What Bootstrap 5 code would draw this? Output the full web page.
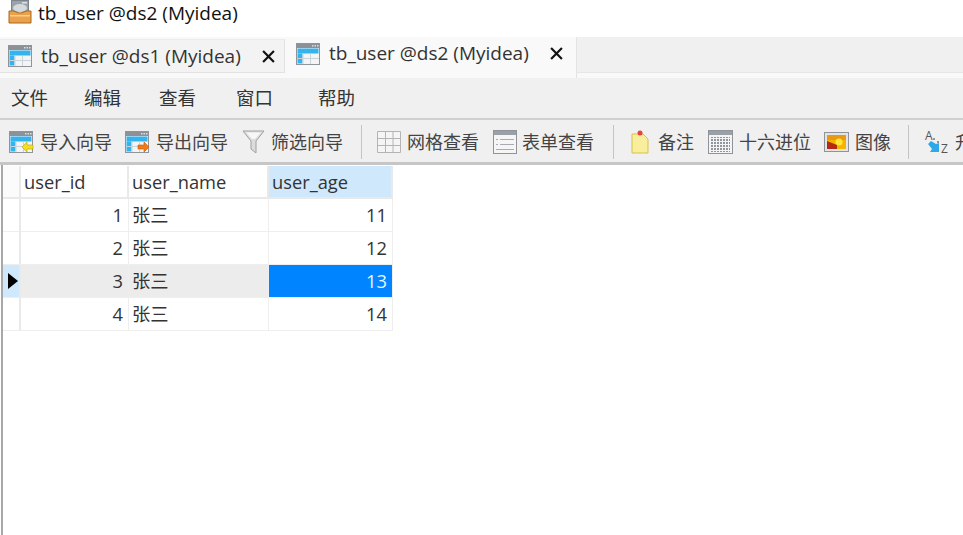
<!DOCTYPE html>
<html lang="zh">
<head>
<meta charset="utf-8">
<title>tb_user @ds2 (Myidea)</title>
<link href="https://cdn.jsdelivr.net/npm/bootstrap@5.3.0/dist/css/bootstrap.min.css" rel="stylesheet">
<style>
html,body{height:535px;overflow:hidden;background:#fff}
body{font-family:"Open Sans","Noto Sans CJK SC",sans-serif;color:#222;font-size:18px}
.titlebar{height:37px;padding-left:8px;gap:6px;color:#111;font-size:19px;line-height:26px}
.tabstrip{height:41px;background:#f9f9f9}
.tabx{height:34px;margin-top:2px;width:285px;background:#f3f3f3;border-right:1px solid #e2e2e2;border-bottom:1px solid #e2e2e2;border-top:1px solid #ececec;padding-left:8px;font-size:19px;color:#333}
.tabx.onx{height:41px;margin-top:0;width:292px;background:#f9f9f9;border:0;border-right:1px solid #e4e4e4;padding:0 0 8px 11px}
.tabfill{flex:1;height:36px;background:#f0f0f0;border-bottom:1px solid #e6e6e6}
.tabname{margin-left:9px;white-space:nowrap}
.closex{margin-left:auto;margin-right:9px;width:13px;height:13px}
.tabx.onx .closex{margin-right:13px}
.menubar{height:42px;background:#f0f0f0;border-bottom:2px solid #cfcfcf;font-size:18.5px;padding-left:11px;color:#333}
.menubar span{white-space:nowrap}
.m1{width:73px}.m2{width:75px}.m3{width:77px}.m4{width:82px}
.toolbar{height:45px;background:#f0f0f0;border-bottom:3px solid #c6c6c6;padding-left:9px;padding-top:2px;font-size:18px;color:#444;white-space:nowrap;width:963px;overflow:hidden}
.tool{gap:6px;flex:none}
.tight{gap:5px}.wide{gap:8px}
.mg13{margin-left:13px}.mg14{margin-left:14px}
.sepx{width:1px;height:34px;background:#c4c4c4;flex:none}
.sa{margin:0 15px 0 18px}.sb{margin:0 16px 0 19px}.sc{margin:0 15px 0 17px}
.gridwrap{height:370px;border-left:2px solid #a8a8a8;margin-left:1px;padding-top:1px}
.dgrid{border-collapse:separate;border-spacing:0;table-layout:fixed;width:390px;font-size:18.3px;line-height:22px;color:#333}
.dgrid td{padding:0 5px 0 3px;border-right:1px solid #eeeeee;border-bottom:1px solid #eeeeee;height:33px;overflow:hidden;white-space:nowrap}
.dgrid tr.headx td{height:33px;border-bottom:2px solid #e9e9e9;border-right:2px solid #e9e9e9}
.rh{width:18px;background:#fff;border-right:2px solid #e9e9e9!important;padding:0!important}
.headx .rh{background:#fbfbfb}
.num{text-align:right}
.curx td{background:#ececec}
.curx .rh{background:#cfe8fc}
.dgrid .selh{background:#cfe8fc}
.dgrid .selc{background:#0084ff;color:#e6f3ff}
.arrowx{display:block;width:0;height:0;margin-left:5px;border-left:10px solid #000;border-top:8px solid transparent;border-bottom:8px solid transparent}
.cg18{width:18px}.cg108{width:108px}.cg140{width:140px}.cg124{width:124px}
svg{display:block;flex:none}
.azx{overflow:visible}
.azx text{font-family:"Open Sans",sans-serif;font-size:12px;fill:#555}
</style>
</head>
<body>
<svg width="0" height="0" class="position-absolute">
<defs>
<symbol id="tbl" viewBox="0 0 24 22">
<rect x=".5" y=".5" width="23" height="21" fill="#f4f4f4" stroke="#8e9499"/>
<rect x="1" y="1" width="22" height="4" fill="#8b9197"/>
<rect x="16" y="2" width="1.5" height="1.5" fill="#ddd"/><rect x="18.5" y="2" width="1.5" height="1.5" fill="#ddd"/><rect x="21" y="2" width="1.5" height="1.5" fill="#ddd"/>
<rect x="1.500" y="5.500" width="21" height="5" fill="#34b4ef"/>
<rect x="1.500" y="10.500" width="5" height="10" fill="#34b4ef"/>
<path d="M7 10.500V21M14.500 10.500V21M2 15.500H23" stroke="#c8d4dc" fill="none"/>
</symbol>
</defs>
</svg>

<div class="titlebar d-flex align-items-start">
<svg width="24" height="24" viewBox="0 0 24 24"><rect x="3.500" y=".5" width="17" height="11" fill="#9aa3aa" stroke="#7d858c"/><rect x="14" y="2" width="5" height="1.500" fill="#e2e2e2"/><ellipse cx="12" cy="8" rx="7" ry="4" fill="#d5dade"/><path d="M1 11H6Q9 13 12 13T18 11H23V23H1Z" fill="#eba14a" stroke="#a9681f"/><rect x="2" y="15" width="20" height="1.500" fill="#f8d08f"/></svg>
<span>tb_user @ds2 (Myidea)</span>
</div>

<div class="tabstrip d-flex align-items-start">
<div class="tabx d-flex align-items-center">
<svg width="24" height="22"><use href="#tbl"/></svg>
<span class="tabname">tb_user @ds1 (Myidea)</span>
<svg class="closex" viewBox="0 0 12 12"><path d="M1 1L11 11M11 1L1 11" stroke="#111" stroke-width="2"/></svg>
</div>
<div class="tabx onx d-flex align-items-center">
<svg width="24" height="22"><use href="#tbl"/></svg>
<span class="tabname">tb_user @ds2 (Myidea)</span>
<svg class="closex" viewBox="0 0 12 12"><path d="M1 1L11 11M11 1L1 11" stroke="#111" stroke-width="2"/></svg>
</div>
<div class="tabfill"></div>
</div>

<div class="menubar d-flex align-items-center">
<span class="m1">文件</span><span class="m2">编辑</span><span class="m3">查看</span><span class="m4">窗口</span><span>帮助</span>
</div>

<div class="toolbar d-flex align-items-center">
<div class="tool d-flex align-items-center">
<svg width="25" height="22" viewBox="0 0 25 22"><use href="#tbl" width="24" height="22"/><path d="M13 16L18 11V14H24V18H18V21Z" fill="#f5e020" stroke="#b9a400" stroke-width=".6"/></svg><span>导入向导</span></div>
<div class="tool mg13 d-flex align-items-center">
<svg width="25" height="22" viewBox="0 0 25 22"><use href="#tbl" width="24" height="22"/><path d="M24 16L19 11V14H13V18H19V21Z" fill="#f47a16" stroke="#c85a05" stroke-width=".6"/></svg><span>导出向导</span></div>
<div class="tool mg14 d-flex align-items-center">
<svg width="23" height="24" viewBox="0 0 23 24"><path d="M1 1H22L14 11V23L9 19V11Z" fill="#dcdcdc" stroke="#a0a0a0"/><path d="M4 2.500H19L13 9H10Z" fill="#f7f7f7"/></svg><span>筛选向导</span></div>
<div class="sepx sa"></div>
<div class="tool d-flex align-items-center">
<svg width="24" height="22" viewBox="0 0 24 22"><path d="M.5.500H23.500V21.500H.5ZM8.500 1V21M16 1V21M1 7.500H23M1 14.500H23" fill="#f5f5f5" stroke="#b4b4b4"/></svg><span>网格查看</span></div>
<div class="tool tight mg14 d-flex align-items-center">
<svg width="24" height="24" viewBox="0 0 24 24"><rect x=".5" y=".5" width="23" height="23" fill="#f5f5f5" stroke="#8e9499"/><rect x="1" y="1" width="22" height="4" fill="#9aa0a5"/><path d="M7 9.500H21M7 14.500H21M3 9.500H5M3 14.500H5M3 19.500H21" stroke="#a8acb0"/></svg><span>表单查看</span></div>
<div class="sepx sb"></div>
<div class="tool wide d-flex align-items-center">
<svg width="20" height="24" viewBox="0 0 20 24"><path d="M2 4H13L18 9V23H2Z" fill="#f8ee9b" stroke="#d7c24f"/><circle cx="10" cy="3" r="2.500" fill="#e8403a"/></svg><span>备注</span></div>
<div class="tool mg14 d-flex align-items-center">
<svg width="25" height="24" viewBox="0 0 25 24"><defs><pattern id="dots" width="3" height="3" patternUnits="userSpaceOnUse"><rect width="2" height="2" fill="#8f979e"/></pattern></defs><rect x=".5" y=".5" width="24" height="23" fill="#f4f4f4" stroke="#8e9499"/><rect x="1" y="1" width="23" height="4" fill="#9aa0a5"/><rect x="3" y="7" width="19" height="15" fill="url(#dots)"/></svg><span>十六进位</span></div>
<div class="tool mg13 d-flex align-items-center">
<svg width="25" height="20" viewBox="0 0 25 20"><rect x=".5" y=".5" width="24" height="19" fill="#e4e4e4" stroke="#8e9499"/><rect x="3" y="3" width="19" height="14" fill="#f4b400"/><rect x="3" y="3" width="19" height="5" fill="#e89a10"/><circle cx="15" cy="10" r="3.500" fill="#fde83a"/><path d="M3 9L13 13V17H3Z" fill="#b52a12"/></svg><span>图像</span></div>
<div class="sepx sc"></div>
<div class="tool tight d-flex align-items-center">
<svg class="azx" width="26" height="26" viewBox="0 0 26 26"><text x="1" y="11">A</text><text x="17" y="24">Z</text><path d="M9 10h2M13 13h2" stroke="#777" stroke-width="1.500"/><path d="M4 15L7 12L12 15L15 14V23H6L8 20Z" fill="#2fa8e8"/></svg><span>升序</span></div>
</div>

<div class="gridwrap">
<table class="dgrid">
<colgroup><col class="cg18"><col class="cg108"><col class="cg140"><col class="cg124"></colgroup>
<tbody>
<tr class="headx"><td class="rh"></td><td>user_id</td><td>user_name</td><td class="selh">user_age</td></tr>
<tr><td class="rh"></td><td class="num">1</td><td>张三</td><td class="num">11</td></tr>
<tr><td class="rh"></td><td class="num">2</td><td>张三</td><td class="num">12</td></tr>
<tr class="curx"><td class="rh"><i class="arrowx"></i></td><td class="num">3</td><td>张三</td><td class="num selc">13</td></tr>
<tr><td class="rh"></td><td class="num">4</td><td>张三</td><td class="num">14</td></tr>
</tbody>
</table>
</div>
<script src="https://cdn.jsdelivr.net/npm/bootstrap@5.3.0/dist/js/bootstrap.bundle.min.js"></script>
</body>
</html>
